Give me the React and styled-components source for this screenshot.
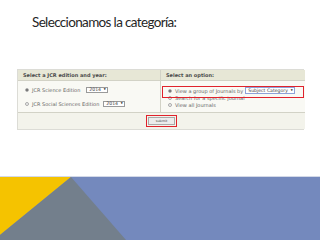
import React from 'react';
import styled, { createGlobalStyle } from 'styled-components';

const GlobalStyle = createGlobalStyle`
    html, body {
        margin: 0;
        padding: 0;
        background: #ffffff;
    }
    * {
        box-sizing: border-box;
    }
`;

const Slide = styled.div`
    width: 320px;
    height: 240px;
    display: flex;
    flex-direction: column;
    background: #ffffff;
    overflow: hidden;
`;

const Title = styled.h1`
    margin: 0;
    padding: 14px 0 0 32px;
    font-family: Lato, "Liberation Sans", sans-serif;
    font-size: 13.5px;
    letter-spacing: -0.65px;
    line-height: 17px;
    font-weight: 400;
    color: #262626;
`;

const Shot = styled.div`
    margin: 38px 0 0 17px;
    width: 287px;
    display: grid;
    grid-template-columns: 143px 144px;
    grid-template-rows: 11px 32px 16px;
    border: 1px solid #dcdcd6;
    font-family: "DejaVu Sans", Verdana, sans-serif;
    color: #444;
`;

const HeadCell = styled.div`
    background: #e7e7d6;
    border-right: ${p => (p.divider ? '1px solid #d2d2c6' : 'none')};
    border-bottom: 1px solid #d2d2c6;
    padding: 0 0 0 5px;
    display: flex;
    align-items: center;
    font-size: 5px;
    font-weight: 700;
    color: #4a4a4a;
`;

const BodyCell = styled.div`
    position: relative;
    background: #f9f9f4;
    border-right: ${p => (p.divider ? '1px solid #d2d2c6' : 'none')};
    border-bottom: 1px solid #d2d2c6;
    display: flex;
    flex-direction: column;
    gap: ${p => p.gap}px;
    padding: ${p => p.pad};
`;

const Row = styled.div`
    display: flex;
    align-items: center;
    height: ${p => p.h || 7}px;
    font-size: 5px;
    color: #666;
    white-space: nowrap;
`;

const Radio = styled.span`
    width: 4px;
    height: 4px;
    border-radius: 50%;
    border: 0.6px solid #aaa;
    background: ${p => (p.on ? 'radial-gradient(circle, #666 0 0.9px, #f2f2f2 1.1px)' : '#f2f2f2')};
    margin-right: 3px;
    flex-shrink: 0;
`;

const Select = styled.span`
    display: inline-flex;
    align-items: center;
    justify-content: space-between;
    width: ${p => (p.wide ? 50 : 22)}px;
    height: ${p => (p.wide ? 7 : 6)}px;
    margin-left: ${p => p.ml}px;
    padding: 0 1.5px 0 2px;
    background: #ffffff;
    border: 0.6px solid ${p => (p.wide ? '#8ea2d8' : '#9a9a9a')};
    font-size: 4.6px;
    color: #444;
    &::after {
        content: '▼';
        font-size: 2.6px;
        color: #222;
    }
`;

const RedMark = styled.div`
    position: absolute;
    left: 1px;
    top: 5px;
    width: 142px;
    height: 12px;
    border: 1.6px solid #e0222c;
`;

const FootCell = styled.div`
    grid-column: 1 / -1;
    background: #f3f3eb;
    display: flex;
    align-items: center;
    justify-content: center;
`;

const Submit = styled.span`
    display: inline-flex;
    align-items: center;
    justify-content: center;
    width: 27px;
    height: 8px;
    background: #ececec;
    border: 0.6px solid #aaa;
    font-size: 3.4px;
    color: #444;
    outline: 1.6px solid #e0222c;
    outline-offset: 1px;
`;

const Spacer = styled.div`
    flex: 1;
`;

const Footer = styled.div`
    height: 64px;
    background: #7489bd;
    border-top: 1px solid #d3d9e8;
    svg {
        display: block;
        width: 100%;
        height: 100%;
    }
`;

export default function App() {
    return (
        <Slide>
            <GlobalStyle />
            <Title>Seleccionamos la categoría:</Title>
            <Shot>
                <HeadCell divider>Select a JCR edition and year:</HeadCell>
                <HeadCell>Select an option:</HeadCell>
                <BodyCell divider gap={7} pad="5px 0 0 7px">
                    <Row>
                        <Radio on />
                        JCR Science Edition
                        <Select ml={6}>2014</Select>
                    </Row>
                    <Row>
                        <Radio />
                        JCR Social Sciences Edition
                        <Select ml={4}>2014</Select>
                    </Row>
                </BodyCell>
                <BodyCell gap={0} pad="5px 0 0 7px">
                    <Row h={9}>
                        <Radio on />
                        View a group of Journals by
                        <Select wide ml={2}>Subject Category</Select>
                    </Row>
                    <Row h={6}>
                        <Radio />
                        Search for a specific journal
                    </Row>
                    <Row h={7}>
                        <Radio />
                        View all Journals
                    </Row>
                    <RedMark />
                </BodyCell>
                <FootCell>
                    <Submit>submit</Submit>
                </FootCell>
            </Shot>
            <Spacer />
            <Footer>
                <svg viewBox="0 0 320 63" preserveAspectRatio="none">
                    <polygon points="0,0 71,0 0,58" fill="#f5c300" />
                    <polygon points="71,0 126,63 0,63 0,58" fill="#737f8c" />
                </svg>
            </Footer>
        </Slide>
    );
}
